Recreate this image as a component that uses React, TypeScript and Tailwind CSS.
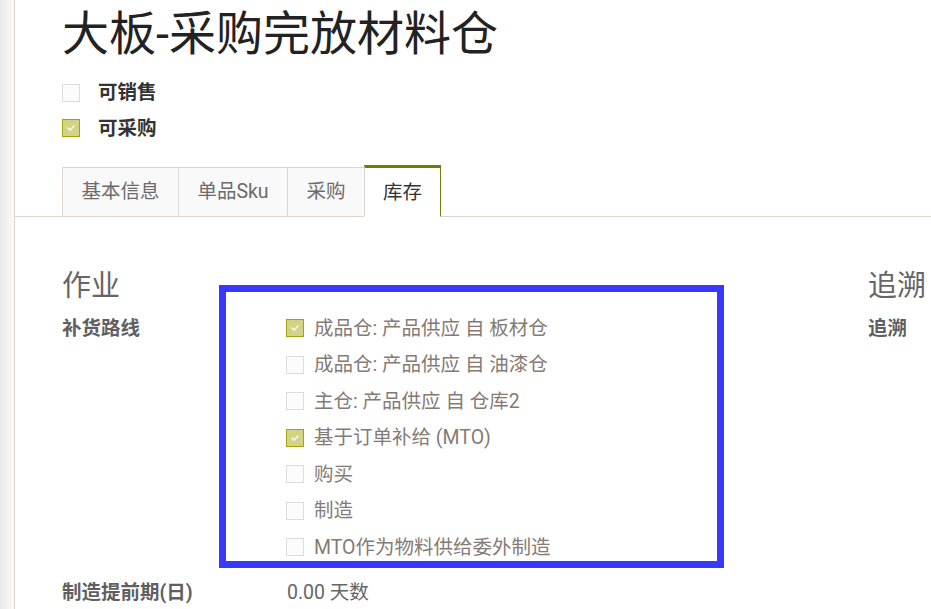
import React from "react";

const FONT = 'Roboto, "Noto Sans CJK SC", "Noto Sans", sans-serif';

function Box({ checked, size = 17 }: { checked: boolean; size?: number }) {
  return (
    <span
      className={
        "inline-flex shrink-0 items-center justify-center border " +
        (checked ? "border-[#a3a30c] bg-[#d3d384]" : "border-[#dcdcdc] bg-[#fcfcfc]")
      }
      style={{ width: size, height: size }}
    >
      {checked && (
        <svg width="10" height="10" viewBox="0 0 10 10">
          <path d="M2 5.2 L4.1 7.2 L8 3" fill="none" stroke="#f4f4e4" strokeWidth="1.8" strokeLinecap="round" strokeLinejoin="round" />
        </svg>
      )}
    </span>
  );
}

const routes: [string, boolean][] = [
  ["成品仓: 产品供应 自 板材仓", true],
  ["成品仓: 产品供应 自 油漆仓", false],
  ["主仓: 产品供应 自 仓库2", false],
  ["基于订单补给 (MTO)", true],
  ["购买", false],
  ["制造", false],
  ["MTO作为物料供给委外制造", false],
];

export default function App() {
  return (
    <div className="relative flex min-h-[609px] w-[931px] overflow-hidden bg-white" style={{ fontFamily: FONT }}>
      <div className="w-[14px] shrink-0 bg-gradient-to-r from-[#e9e9e9] to-[#fbfbfb]" />
      <div className="flex-1 border-l border-[#d9d4cf] bg-white">
        <div className="pl-[47px]">
          <h1 className="mt-[6px] text-[47px] leading-[56px] text-[#222222] whitespace-nowrap">大板-采购完放材料仓</h1>
          <div className="mt-[13px] flex flex-col">
            <div className="flex h-[35.5px] items-center gap-[18px]">
              <Box checked={false} size={18} />
              <span className="text-[19.5px] font-bold text-[#333333]">可销售</span>
            </div>
            <div className="flex h-[35.5px] items-center gap-[18px]">
              <Box checked={true} size={18} />
              <span className="text-[19.5px] font-bold text-[#333333]">可采购</span>
            </div>
          </div>
        </div>
        <div className="mt-[19px] flex items-end border-b border-[#dcd6d2] pl-[47px]">
          <div className="-mb-px flex h-[50px] w-[116px] items-center justify-center border border-r-0 border-[#dcd6d2] bg-[#f9f9f9] text-[19.5px] text-[#6b6b6b]">基本信息</div>
          <div className="-mb-px flex h-[50px] w-[109px] items-center justify-center border border-r-0 border-[#dcd6d2] bg-[#f9f9f9] text-[19.5px] text-[#6b6b6b]">单品Sku</div>
          <div className="-mb-px flex h-[50px] w-[77px] items-center justify-center border border-r-0 border-[#dcd6d2] bg-[#f9f9f9] text-[19.5px] text-[#6b6b6b]">采购</div>
          <div className="-mb-px flex h-[52px] w-[77px] items-center justify-center border border-t-[3px] border-[#dcd6d2] border-t-[#6f7b0a] border-r-[#6f7b0a] border-b-white bg-white pt-[1px] text-[19.5px] text-[#333333]">库存</div>
        </div>
        <div className="flex pl-[47px]">
          <div className="w-[806px] shrink-0">
            <div className="mt-[51px] text-[29px] leading-[36px] text-[#666666]">作业</div>
            <div className="mt-[6px] flex">
              <div className="flex h-[36.5px] w-[224px] shrink-0 items-center text-[19.5px] font-bold text-[#5f5f5f]">补货路线</div>
              <div className="flex flex-col pb-[8.5px]">
                {routes.map(([label, checked]) => (
                  <div key={label} className="flex h-[36.5px] items-center gap-[10px]">
                    <Box checked={checked} size={18} />
                    <span className="whitespace-nowrap text-[19.5px] text-[#857b74]">{label}</span>
                  </div>
                ))}
              </div>
            </div>
            <div className="flex">
              <div className="flex h-[36.5px] w-[224px] shrink-0 items-center whitespace-nowrap text-[19.5px] font-bold text-[#5f5f5f]">制造提前期(日)</div>
              <div className="flex h-[36.5px] items-center pl-[1px] text-[19.5px] text-[#666666]">0.00 天数</div>
            </div>
          </div>
          <div className="flex-1">
            <div className="mt-[51px] whitespace-nowrap text-[29px] leading-[36px] text-[#666666]">追溯</div>
            <div className="mt-[6px] flex h-[36.5px] items-center whitespace-nowrap text-[19.5px] font-bold text-[#5f5f5f]">追溯</div>
          </div>
        </div>
      </div>
      <div className="pointer-events-none absolute left-[219px] top-[285px] h-[283px] w-[505px] border-[7px] border-[#3838ff]" />
    </div>
  );
}
